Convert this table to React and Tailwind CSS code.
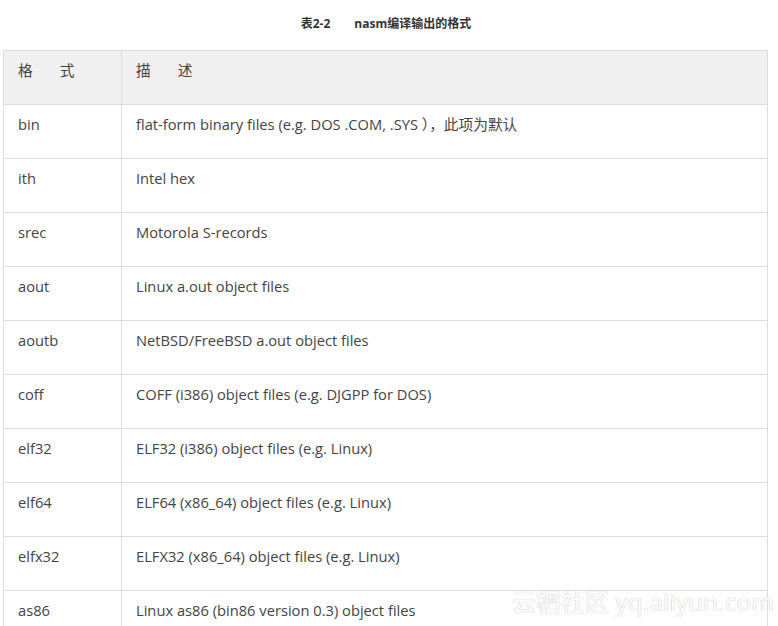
import React from "react";

const rows = [
  ["bin", "flat-form binary files (e.g. DOS .COM, .SYS ），此项为默认"],
  ["ith", "Intel hex"],
  ["srec", "Motorola S-records"],
  ["aout", "Linux a.out object files"],
  ["aoutb", "NetBSD/FreeBSD a.out object files"],
  ["coff", "COFF (i386) object files (e.g. DJGPP for DOS)"],
  ["elf32", "ELF32 (i386) object files (e.g. Linux)"],
  ["elf64", "ELF64 (x86_64) object files (e.g. Linux)"],
  ["elfx32", "ELFX32 (x86_64) object files (e.g. Linux)"],
  ["as86", "Linux as86 (bin86 version 0.3) object files"],
];

export default function App() {
  return (
    <div
      className="relative w-[778px] h-[626px] overflow-hidden bg-white text-[#444]"
      style={{ fontFamily: '"Open Sans", "Noto Sans CJK SC", sans-serif' }}
    >
      <div className="h-[50px] pt-[14px] text-center text-[12px] font-bold text-[#333] leading-[20px] pr-[6px]">
        <span className="mr-[24px]">表2-2</span>
        <span>nasm编译输出的格式</span>
      </div>
      <div className="ml-[3px] w-[765px] border border-[#ddd]">
        <div className="flex h-[54px] bg-[#f0f0f0] border-b border-[#ddd] text-[14.7px] leading-[20px]">
          <div className="w-[118px] border-r border-[#ddd] pl-[14px] pt-[9px]">
            格<span className="ml-[27px]">式</span>
          </div>
          <div className="flex-1 pl-[14px] pt-[9px]">
            描<span className="ml-[27px]">述</span>
          </div>
        </div>
        {rows.map(([a, b], i) => (
          <div
            key={a}
            className={`flex h-[54px] text-[14.7px] leading-[20px] ${i < rows.length - 1 ? "border-b border-[#ddd]" : ""}`}
          >
            <div className="w-[118px] border-r border-[#ddd] pl-[14px] pt-[9px]">{a}</div>
            <div className="flex-1 pl-[14px] pt-[9px]">{b}</div>
          </div>
        ))}
      </div>
      <div
        className="absolute left-[512px] top-[587px] text-[24px] leading-[30px] text-white tracking-[0.3px]"
        style={{ textShadow: "0 0 1px #c4c4c4, 0 0 1px #c4c4c4" }}
      >
        云栖社区 yq.aliyun.com
      </div>
    </div>
  );
}
